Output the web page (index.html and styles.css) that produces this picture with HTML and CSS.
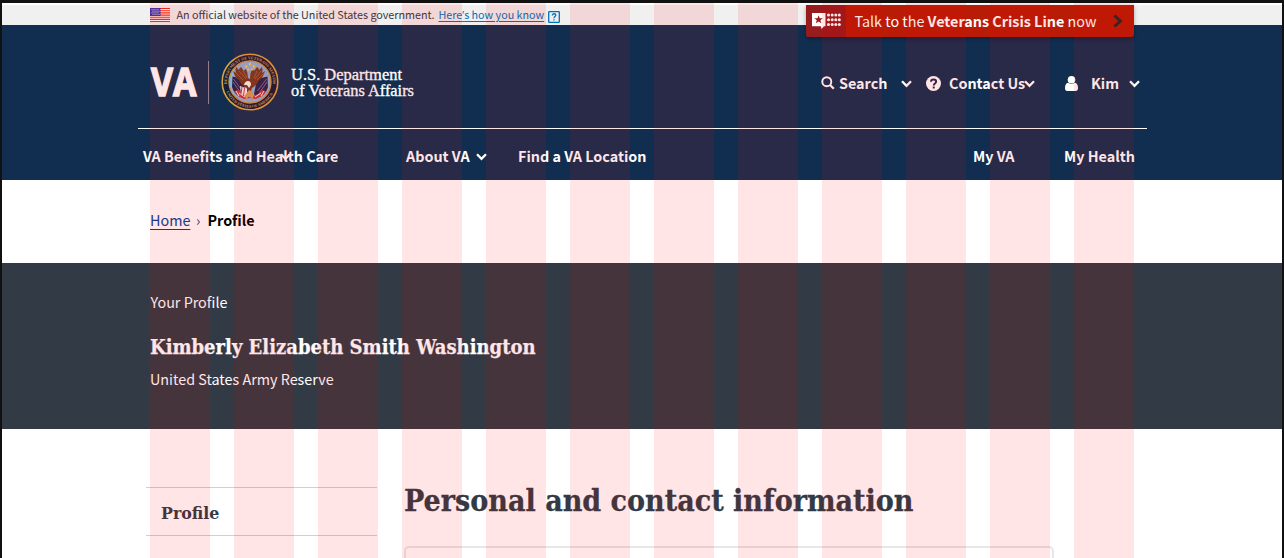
FILE: index.html
```html
<!DOCTYPE html>
<html lang="en">
<head>
<meta charset="utf-8">
<title>Profile | Veterans Affairs</title>
<link rel="stylesheet" href="styles.css">
</head>
<body>
<div class="page">
  <div class="gov-banner">
    <svg class="flag" width="20" height="14" viewBox="0 0 20 14"><rect width="20" height="14" fill="#fff"/><path d="M0 .5h20M0 2.7h20M0 4.9h20M0 7.1h20M0 9.3h20M0 11.4h20M0 13.5h20" stroke="#f02d17" stroke-width="1.1"/><rect width="10.5" height="8" fill="#3a34ae"/><path d="M1.5 1.7h8M2.5 3.2h7M1.5 4.8h8M2.5 6.4h7" stroke="#fff" stroke-width=".8" stroke-dasharray="1 1"/></svg>
    <span class="gov-text">An official website of the United States government.</span>
    <a class="gov-link">Here<span class="apos">’</span>s how you know</a>
    <svg class="gov-help" width="12" height="12" viewBox="0 0 12 12"><rect x=".7" y=".7" width="10.6" height="10.6" rx=".6" fill="none" stroke="#0071bc" stroke-width="1.3"/><path d="M4.300 4.500c0-2.400 3.500-2.200 3.500-.2C7.800 5.500 6 5.600 6 7.200M6 8.200v1.300" fill="none" stroke="#0071bc" stroke-width="1.300"/></svg>
    <div class="crisis">
      <div class="crisis-icon"><svg width="30" height="20" viewBox="0 0 30 20"><path d="M1 2h13.500v13.200H13L10.600 18 9.800 15.200H1z" fill="#fff"/><path d="M7.600 4.300l1.100 3h3.200L9.400 9.200l1 3.100-2.800-1.900-2.800 1.900 1-3.100-2.500-1.900h3.200z" fill="#981b1e"/><g fill="#fff"><circle cx="17.500" cy="4" r="1.500"/><circle cx="21.200" cy="4" r="1.500"/><circle cx="24.800" cy="4" r="1.500"/><circle cx="28.300" cy="4" r="1.500"/><circle cx="17.500" cy="8.800" r="1.500"/><circle cx="21.200" cy="8.800" r="1.500"/><circle cx="24.800" cy="8.800" r="1.500"/><circle cx="28.300" cy="8.800" r="1.500"/><circle cx="17.500" cy="13.500" r="1.500"/><circle cx="21.200" cy="13.500" r="1.500"/><circle cx="24.800" cy="13.500" r="1.500"/><circle cx="28.300" cy="13.500" r="1.500"/></g></svg></div>
      <span class="crisis-text">Talk to the <b>Veterans Crisis Line</b> now</span>
      <svg class="crisis-arrow" width="10" height="14" viewBox="0 0 10 14"><path d="M1.500 1.500L7.300 7l-5.800 5.500" fill="none" stroke="#262626" stroke-width="3"/></svg>
    </div>
  </div>

  <header class="header">
    <div class="brand-row">
      <svg class="logo" width="270" height="62" viewBox="0 0 270 62">
        <text class="logo-va" x="1" y="42.500" textLength="45.500" lengthAdjust="spacingAndGlyphs">VA</text>
        <path d="M58.500 8v43" stroke="#8d8797" stroke-width="1"/>
        <g transform="translate(100 29)">
          <circle r="28.500" fill="#171c38"/>
          <circle r="27.800" fill="none" stroke="#d6a440" stroke-width="1.600"/>
          <path id="seal-ring" d="M-22.800 4a23.100 23.100 0 1 1 45.600 0" fill="none"/>
          <path id="seal-low" d="M-25.200 5a25.700 25.700 0 0 0 50.400 0" fill="none"/>
          <text class="seal-text"><textPath href="#seal-ring" startOffset="2" textLength="76" lengthAdjust="spacingAndGlyphs">DEPARTMENT OF VETERANS AFFAIRS</textPath></text>
          <text class="seal-text"><textPath href="#seal-low" startOffset="5" textLength="58" lengthAdjust="spacingAndGlyphs">UNITED STATES OF AMERICA</textPath></text>
          <circle r="21" fill="#8fb0d2" stroke="#c99841" stroke-width="1.300"/>
          <path d="M-17.500-5.500L-7-3-4 12l-3 4q-9-3-11-11zM17.500-5.500L7-3 4 12l3 4q9-3 11-11z" fill="#262550"/>
          <path d="M-16.500-3l9 12M-17-0l7 10M16.500-3l-9 12M17 0l-7 10" stroke="#8f8db4" stroke-width=".7"/>
          <path d="M-16 9l5-1 3 4 8 3 8-3 3-4 5 1-4 5-6 3-6-1-6 1-6-3z" fill="#c8373d"/>
          <path d="M-14 9l3 5M-11 11l6 4M14 9l-3 5M11 11l-6 4" stroke="#f5e9e8" stroke-width="1" fill="none"/>
          <path d="M-10 4l8 3-1 8-6-3z" fill="#f7eeee"/><path d="M-8 5l-1 7M-5.500 6l-1 8" stroke="#c8373d"/>
          <path d="M-3 6Q-9 3-11-2q-4-2-6-9l3 2q-1-3 0-6l3 3q0-2 2-3l3 4q1-2 2-2 2 4 2 9l2 1q0-6 2-10 1 0 2 2l3-4q2 1 2 3l3-3q1 3 0 6l3-2q-2 7-6 9-2 5-7 8l-2 5-3 1z" fill="#743d22"/>
          <path d="M-14-9l7 7M-11-11l7 8M-7-11l4 7M14-9L7-2M11-11L5-3M7-11L4-4" stroke="#a96239" stroke-width=".9"/>
          <path d="M-6 3q1-4 4-4 3 0 3 4l-2 3-2-3z" fill="#f9f3e8"/>
          <path d="M-1 8l3 2 2 4-2 3-3-3-3 4-1-5z" fill="#d99a55"/>
          <g fill="#f6ce49"><circle cx="0" cy="-18" r="1.200"/><circle cx="-3.800" cy="-15.500" r="1.200"/><circle cx="3.800" cy="-15.500" r="1.200"/><circle cx="-1.800" cy="-12.500" r="1.100"/><circle cx="2" cy="-12.500" r="1.100"/></g>
        </g>
        <text class="logo-dept" x="141" y="27" textLength="111" lengthAdjust="spacingAndGlyphs">U.S. Department</text>
        <text class="logo-dept" x="141" y="43" textLength="123" lengthAdjust="spacingAndGlyphs">of Veterans Affairs</text>
      </svg>
      <div class="tools">
        <svg class="i-search" width="14" height="14" viewBox="0 0 14 14"><circle cx="5.800" cy="5.700" r="4.500" fill="none" stroke="#fff" stroke-width="1.900"/><path d="M9 9l3.800 3.800" stroke="#fff" stroke-width="2.300"/></svg>
        <span class="t-search">Search</span>
        <svg class="chev" width="11" height="8" viewBox="0 0 11 8"><path d="M1 1.300l4.500 4.600L10 1.300" fill="none" stroke="#fff" stroke-width="2.300"/></svg>
        <svg class="i-help" width="15" height="15" viewBox="0 0 15 15"><circle cx="7.500" cy="7.500" r="7.500" fill="#fff"/><path d="M5 5.700c.2-3 5.100-2.700 5.100.1 0 1.800-2.300 1.700-2.300 3.600M7.700 10.400v2.200" fill="none" stroke="#25294a" stroke-width="2"/></svg>
        <span class="t-contact">Contact Us</span>
        <svg class="chev" width="11" height="8" viewBox="0 0 11 8"><path d="M1 1.300l4.500 4.600L10 1.300" fill="none" stroke="#fff" stroke-width="2.300"/></svg>
        <svg class="i-user" width="13" height="15" viewBox="0 0 13 15"><circle cx="6.500" cy="3.800" r="3.800" fill="#fff"/><path d="M3 6.800Q6.500 9 10 6.800q3 .7 3 5.200 0 3-2.300 3H2.300Q0 15 0 12q0-4.500 3-5.200z" fill="#fff"/></svg>
        <span class="t-kim">Kim</span>
        <svg class="chev" width="11" height="8" viewBox="0 0 11 8"><path d="M1 1.300l4.500 4.600L10 1.300" fill="none" stroke="#fff" stroke-width="2.300"/></svg>
      </div>
    </div>
    <nav class="nav">
      <span class="n-benefits">VA Benefits and Health Care<svg class="nav-over" width="11" height="8" viewBox="0 0 11 8"><path d="M1 1.300l4.500 4.600L10 1.300" fill="none" stroke="#fff" stroke-width="2.300"/></svg></span>
      <span class="n-about">About VA</span>
      <svg class="chev nav-chev" width="11" height="8" viewBox="0 0 11 8"><path d="M1 1.300l4.500 4.600L10 1.300" fill="none" stroke="#fff" stroke-width="2.300"/></svg>
      <span class="n-find">Find a VA Location</span>
      <span class="n-my">My VA</span>
      <span class="n-health">My Health</span>
    </nav>
  </header>

  <div class="crumbs"><a class="crumb-home">Home</a><span class="crumb-sep">›</span><b class="crumb-here">Profile</b></div>

  <section class="hero">
    <p class="hero-label">Your Profile</p>
    <h2 class="hero-name">Kimberly Elizabeth Smith Washington</h2>
    <p class="hero-branch">United States Army Reserve</p>
  </section>

  <main class="main">
    <aside class="side"><div class="side-item"><span class="side-text">Profile</span></div></aside>
    <div class="content">
      <h1 class="title">Personal and contact information</h1>
      <div class="card"></div>
    </div>
  </main>

  <div class="grid-overlay"><i></i><i></i><i></i><i></i><i></i><i></i><i></i><i></i><i></i><i></i><i></i><i></i></div>
</div>
</body>
</html>
```

FILE: styles.css
```css
* { box-sizing: border-box; }
body { margin: 0; font-family: "Noto Sans CJK SC", sans-serif; font-size: 14.35px; }
h1, h2, p { margin: 0; }
svg { display: block; flex: none; }
.page { position: relative; width: 1284px; height: 558px; overflow: hidden; background: #fff; border: solid #111; border-width: 3px 2px 0; }

.gov-banner { height: 22px; padding-left: 148px; display: flex; align-items: flex-start; background: #f0f0f0; border-top: 2px solid #fff; white-space: nowrap; }
.flag { margin: 3px 6.5px 0 0; }
.gov-text, .gov-link { height: 20px; line-height: 19px; font-size: 10.75px; color: #323a45; }
.gov-text { width: 262px; }
.gov-link { width: 107px; color: #0071bc; text-decoration: underline; text-underline-offset: 2px; }
.apos { font-family: "Open Sans", sans-serif; line-height: 1; }
.gov-help { margin: 6px 0 0 2.5px; }
.crisis { position: relative; z-index: 1; width: 328px; height: 32px; margin-left: 246px; display: flex; align-items: center; background: #b81b06; border-radius: 0 0 3px 3px; box-shadow: 0 2px 4px rgba(0,0,0,.3); color: #fff; overflow: hidden; }
.crisis-icon { width: 40px; height: 32px; padding: 6px 5px; background: #981b1e; }
.crisis-text { width: 258px; padding-left: 8.5px; line-height: 32px; }
.crisis-arrow { margin-left: 9px; }

.header { height: 155px; padding: 0 135px 0 136px; background: #112e51; color: #fff; font-weight: 700; white-space: nowrap; }
.brand-row { height: 104px; display: flex; align-items: flex-start; justify-content: space-between; border-bottom: 1px solid #fff; }
.logo { margin: 28px 0 0 12px; }
.logo-va { font: 700 39px "Open Sans", sans-serif; fill: #fff; stroke: #fff; stroke-width: 1.5px; }
.logo-dept { font: 400 17px "Liberation Serif", serif; fill: #fff; stroke: #fff; stroke-width: .35px; }
.seal-text { font: 700 4px "Liberation Serif", serif; fill: #c9a14f; }
.tools { display: flex; align-items: center; height: 24px; margin: 46px 7px 0 0; line-height: 24px; }
.i-search { margin-right: 4px; }
.t-search { width: 62px; }
.chev { margin-top: 2px; }
.i-help { margin: 0 8px 0 14px; }
.t-contact { width: 75px; }
.i-user { margin: 0 13px 0 30px; }
.t-kim { width: 38px; }
.nav { height: 50px; display: flex; align-items: center; padding: 4px 0 0 5px; line-height: 24px; }
.n-benefits { position: relative; width: 263px; }
.nav-over { position: absolute; left: 137px; top: 9px; }
.n-about { width: 70px; }
.n-find { width: 455px; margin-left: 31px; }
.n-my { width: 91px; }

.crumbs { height: 83px; padding: 0 0 3px 148px; display: flex; align-items: center; line-height: 24px; }
.crumb-home { width: 40px; color: #003e9b; text-decoration: underline; text-underline-offset: 3px; }
.crumb-sep { width: 17.5px; padding-left: 6px; color: #205493; }
.crumb-here { color: #000; }

.hero { height: 166px; padding: 27px 0 0 148px; background: #323a45; color: #fff; }
.hero-label, .hero-branch { line-height: 24px; }
.hero-label { padding-left: .5px; }
.hero-name { margin: 19px 0 6px; font: 700 20px/28px "DejaVu Serif", serif; transform-origin: 0 50%; transform: scaleX(.9); white-space: nowrap; -webkit-text-stroke: .25px currentColor; }

.main { display: flex; padding-left: 144px; }
.side { width: 231px; padding-top: 58px; }
.side-item { height: 49px; border: solid #d0d0d3; border-width: 1px 0; padding-left: 15px; }
.side-text { display: inline-block; font: 700 17px/50px "DejaVu Serif", serif; color: #323a45; transform-origin: 0 50%; transform: scaleX(.93); }
.content { margin-left: 27px; width: 650px; padding-top: 51px; }
.title { font: 700 30px/42px "DejaVu Serif", serif; color: #323a45; white-space: nowrap; transform-origin: 0 50%; transform: scaleX(.901); -webkit-text-stroke: .3px currentColor; }
.card { margin-top: 24px; height: 60px; border: 2px solid #e7e7e8; border-radius: 5px; }

.grid-overlay { position: absolute; z-index: 2; top: 0; bottom: 0; left: 148px; width: 984px; display: grid; grid-template-columns: repeat(12, 60px); gap: 24px; pointer-events: none; }
.grid-overlay i { background: rgba(252, 0, 0, .1); }
```
